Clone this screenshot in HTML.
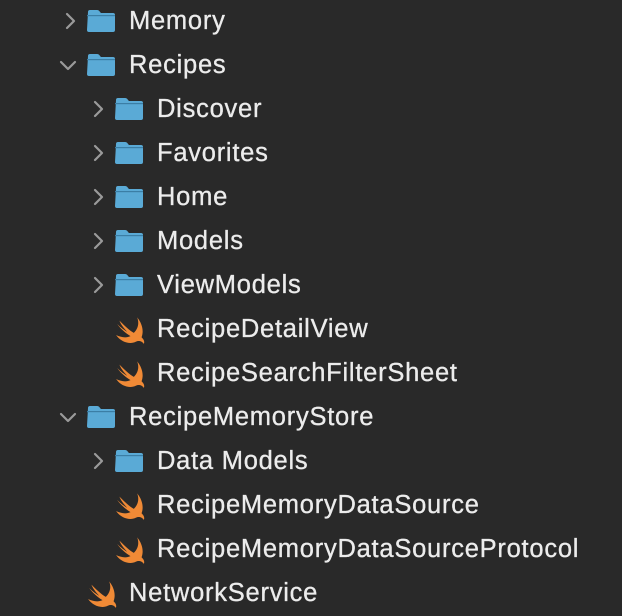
<!DOCTYPE html>
<html><head><style>
body{margin:0;width:622px;height:616px;background:#292929;overflow:hidden;font-family:"Liberation Sans",sans-serif;}
.r{position:absolute;height:44px;left:0;width:622px;}
.t{position:absolute;top:8px;font-size:25.5px;letter-spacing:0.75px;color:#ececec;line-height:30px;-webkit-text-stroke:0.3px #ececec;}
.c{position:absolute;top:13px;width:20px;height:20px;}
.i{position:absolute;}
</style></head><body>
<svg width="0" height="0" style="position:absolute">
<defs>
<symbol id="f" viewBox="0 0 30 24"><path d="M2,4 Q2,2 4,2 L11,2 Q13,2 14,4 L15,5 L27,5 Q29,5 29,7 L29,22 Q29,24 27,24 L3,24 Q1,24 1,22 Z" fill="#5aaad6"/><rect x="1" y="7" width="28" height="1.2" fill="#3b7ea5"/></symbol>
<symbol id="s" viewBox="0 0 28 26"><path d="M20,2 C25,8 26,15 24,20 C26,22 27,24 26,26 C24,23 21,23 19,24 C13,27 5,24 1,18 C5,20 10,21 14,19 C9,16 4,11 2,8 C5,11 9,14 11,15 C8,12 5,8 4,5 C8,9 13,14 17,16 C21,12 22,7 20,2 Z" fill="#f08a36"/></symbol>
<symbol id="cr" viewBox="0 0 20 20"><path d="M7,3 L14,10 L7,17" fill="none" stroke="#9a9a9a" stroke-width="2.2" stroke-linecap="round" stroke-linejoin="round"/></symbol>
<symbol id="cd" viewBox="0 0 20 20"><path d="M3,7 L10,14 L17,7" fill="none" stroke="#9a9a9a" stroke-width="2.2" stroke-linecap="round" stroke-linejoin="round"/></symbol>
</defs></svg>

<div class="r" style="top:-2px"><svg class="c" style="left:60px"><use href="#cr"/></svg><svg class="i" style="left:86px;top:10px" width="30" height="24"><use href="#f"/></svg><div class="t" style="left:129px">Memory</div></div>
<div class="r" style="top:42px"><svg class="c" style="left:58px"><use href="#cd"/></svg><svg class="i" style="left:86px;top:10px" width="30" height="24"><use href="#f"/></svg><div class="t" style="left:129px">Recipes</div></div>
<div class="r" style="top:86px"><svg class="c" style="left:88px"><use href="#cr"/></svg><svg class="i" style="left:114px;top:10px" width="30" height="24"><use href="#f"/></svg><div class="t" style="left:157px">Discover</div></div>
<div class="r" style="top:130px"><svg class="c" style="left:88px"><use href="#cr"/></svg><svg class="i" style="left:114px;top:10px" width="30" height="24"><use href="#f"/></svg><div class="t" style="left:157px">Favorites</div></div>
<div class="r" style="top:174px"><svg class="c" style="left:88px"><use href="#cr"/></svg><svg class="i" style="left:114px;top:10px" width="30" height="24"><use href="#f"/></svg><div class="t" style="left:157px">Home</div></div>
<div class="r" style="top:218px"><svg class="c" style="left:88px"><use href="#cr"/></svg><svg class="i" style="left:114px;top:10px" width="30" height="24"><use href="#f"/></svg><div class="t" style="left:157px">Models</div></div>
<div class="r" style="top:262px"><svg class="c" style="left:88px"><use href="#cr"/></svg><svg class="i" style="left:114px;top:10px" width="30" height="24"><use href="#f"/></svg><div class="t" style="left:157px">ViewModels</div></div>
<div class="r" style="top:306px"><svg class="i" style="left:115px;top:9px" width="31" height="29"><use href="#s"/></svg><div class="t" style="left:157px">RecipeDetailView</div></div>
<div class="r" style="top:350px"><svg class="i" style="left:115px;top:9px" width="31" height="29"><use href="#s"/></svg><div class="t" style="left:157px">RecipeSearchFilterSheet</div></div>
<div class="r" style="top:394px"><svg class="c" style="left:58px"><use href="#cd"/></svg><svg class="i" style="left:86px;top:10px" width="30" height="24"><use href="#f"/></svg><div class="t" style="left:129px">RecipeMemoryStore</div></div>
<div class="r" style="top:438px"><svg class="c" style="left:88px"><use href="#cr"/></svg><svg class="i" style="left:114px;top:10px" width="30" height="24"><use href="#f"/></svg><div class="t" style="left:157px">Data Models</div></div>
<div class="r" style="top:482px"><svg class="i" style="left:115px;top:9px" width="31" height="29"><use href="#s"/></svg><div class="t" style="left:157px">RecipeMemoryDataSource</div></div>
<div class="r" style="top:526px"><svg class="i" style="left:115px;top:9px" width="31" height="29"><use href="#s"/></svg><div class="t" style="left:157px">RecipeMemoryDataSourceProtocol</div></div>
<div class="r" style="top:570px"><svg class="i" style="left:87px;top:9px" width="31" height="29"><use href="#s"/></svg><div class="t" style="left:129px">NetworkService</div></div>
</body></html>
